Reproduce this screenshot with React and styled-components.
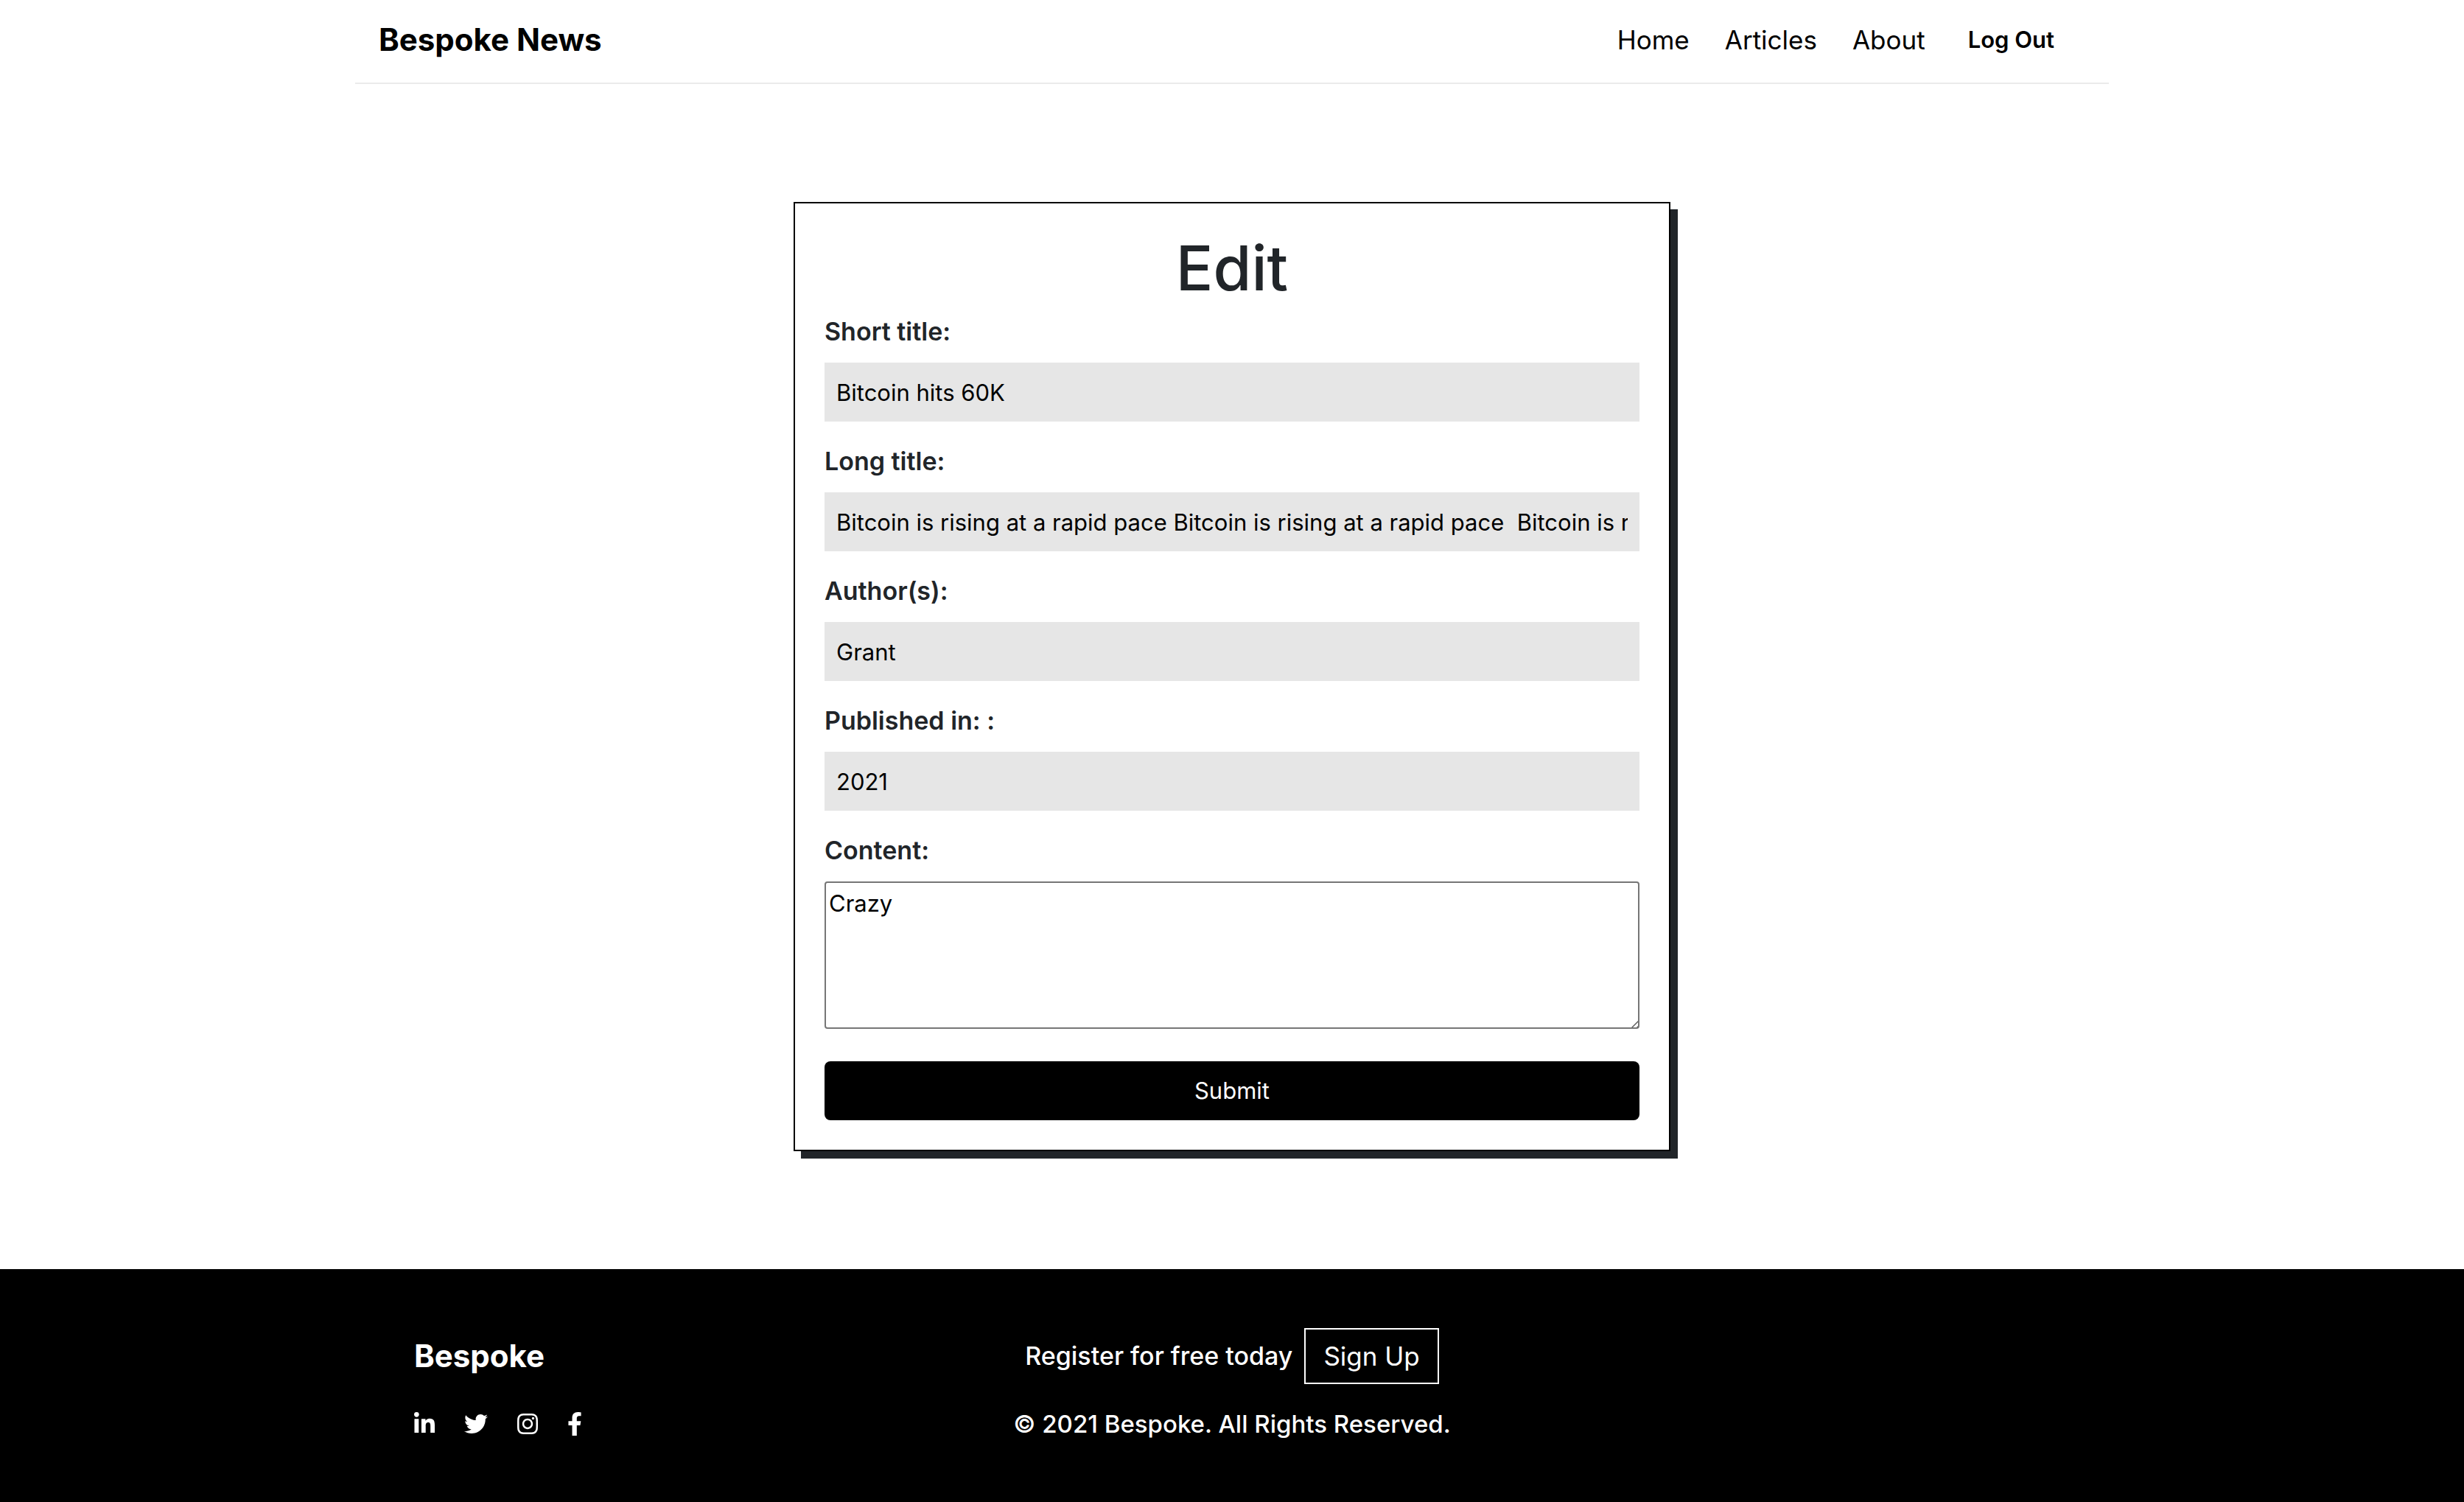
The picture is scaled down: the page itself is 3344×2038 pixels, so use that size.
import React, { useState } from 'react';
import styled, { createGlobalStyle } from 'styled-components';
import { FaLinkedinIn, FaTwitter, FaInstagram, FaFacebookF } from 'react-icons/fa';

const GlobalStyle = createGlobalStyle`
  *, *::before, *::after { box-sizing: border-box; }
  html { background: #000; }
  body {
    margin: 0;
    background: #fff;
    color: #212529;
    font-family: Inter, "Liberation Sans", sans-serif;
    font-size: 34px;
    line-height: 48px;
  }
  a { color: inherit; text-decoration: none; }
`;

const Page = styled.div`
  display: flex;
  flex-direction: column;
  min-height: 100vh;
`;

const Container = styled.div`
  width: 100%;
  max-width: 2380px;
  margin: 0 auto;
`;

const Header = styled(Container).attrs({ as: 'header' })`
  display: flex;
  align-items: center;
  justify-content: space-between;
  padding: 22px 74px 26px 32px;
  border-bottom: 2px solid #ebebeb;
  color: #000;
`;

const Brand = styled.a`
  font-size: 42px;
  font-weight: 700;
  line-height: 64px;
`;

const Nav = styled.nav`
  display: flex;
  align-items: center;
  gap: 48px;
`;

const NavLink = styled.a`
  font-size: 35px;
`;

const LogOut = styled.button`
  padding: 0 0 0 10px;
  border: 0;
  background: none;
  color: #000;
  font: inherit;
  font-size: 31px;
  font-weight: 600;
  cursor: pointer;
`;

const Main = styled(Container).attrs({ as: 'main' })`
  flex: 1;
  padding: 160px 0;
`;

const Card = styled.form`
  display: flex;
  flex-direction: column;
  width: 50%;
  margin: 0 auto;
  padding: 40px;
  border: 2px solid #000;
  background: #fff;
  box-shadow: 10px 10px 0 #212529;
`;

const Title = styled.h1`
  margin: 0 0 16px;
  font-size: 84px;
  font-weight: 500;
  line-height: 96px;
  text-align: center;
`;

const Field = styled.div`
  display: flex;
  flex-direction: column;
  gap: 20px;
  margin-bottom: 32px;
`;

const Label = styled.label`
  font-weight: 600;
  line-height: 44px;
`;

const TextInput = styled.input`
  width: 100%;
  height: 80px;
  padding: 0 16px;
  border: 0;
  background: #e6e6e6;
  color: #000;
  font: inherit;
  font-size: 31px;
`;

const TextArea = styled.textarea`
  display: block;
  width: 100%;
  height: 200px;
  margin-bottom: 12px;
  padding: 4px;
  border: 2px solid #767676;
  border-radius: 4px;
  color: #000;
  font: inherit;
  font-size: 31px;

  &::-webkit-scrollbar { width: 20px; height: 20px; }
  &::-webkit-resizer {
    background: url("data:image/svg+xml,%3Csvg xmlns='http://www.w3.org/2000/svg' width='20' height='20' fill='none' stroke='%23555' stroke-width='1.4'%3E%3Cpath d='M4 18L18 4M11 18L18 11'/%3E%3C/svg%3E") no-repeat;
  }
`;

const Submit = styled.button`
  height: 80px;
  border: 0;
  border-radius: 8px;
  background: #000;
  color: #fff;
  font: inherit;
  font-size: 31px;
  cursor: pointer;
`;

const FooterBar = styled.footer`
  background: #000;
  color: #fff;
`;

const FooterGrid = styled(Container)`
  display: grid;
  grid-template-columns: repeat(3, 1fr);
  padding: 80px 80px 82px;
`;

const FooterColumn = styled.div`
  display: flex;
  flex-direction: column;
  align-items: ${({ $align }) => $align};
  gap: 30px;
`;

const FooterBrand = styled(Brand)`
  line-height: 76px;
`;

const Socials = styled.div`
  display: flex;
  align-items: center;
  gap: 40px;
  height: 48px;
`;

const SocialLink = styled.a`
  display: flex;

  svg {
    width: ${({ $width }) => $width}px;
    height: 32px;
  }
`;

const Register = styled.div`
  display: flex;
  align-items: center;
  gap: 16px;
  font-weight: 500;
`;

const SignUp = styled.button`
  height: 76px;
  padding: 0 24px;
  border: 2px solid #fff;
  background: none;
  color: #fff;
  font: inherit;
  font-size: 35px;
  font-weight: 400;
  cursor: pointer;
`;

const Copyright = styled.p`
  margin: 0;
  font-size: 33px;
  font-weight: 500;
`;

const links = ['Home', 'Articles', 'About'];

const fields = [
  { id: 'shortTitle', label: 'Short title:' },
  { id: 'longTitle', label: 'Long title:' },
  { id: 'authors', label: 'Author(s):' },
  { id: 'published', label: 'Published in: :' },
];

const socials = [
  { name: 'LinkedIn', Icon: FaLinkedinIn, width: 28 },
  { name: 'Twitter', Icon: FaTwitter, width: 32 },
  { name: 'Instagram', Icon: FaInstagram, width: 28 },
  { name: 'Facebook', Icon: FaFacebookF, width: 20 },
];

const article = {
  shortTitle: 'Bitcoin hits 60K',
  longTitle:
    'Bitcoin is rising at a rapid pace Bitcoin is rising at a rapid pace  Bitcoin is rising at a rapid pace',
  authors: 'Grant',
  published: '2021',
  content: 'Crazy',
};

export default function App() {
  const [values, setValues] = useState(article);
  const update = (event) =>
    setValues({ ...values, [event.target.id]: event.target.value });

  return (
    <Page>
      <GlobalStyle />
      <Header>
        <Brand href="#">Bespoke News</Brand>
        <Nav>
          {links.map((link) => (
            <NavLink key={link} href="#">{link}</NavLink>
          ))}
          <LogOut type="button">Log Out</LogOut>
        </Nav>
      </Header>
      <Main>
        <Card onSubmit={(event) => event.preventDefault()}>
          <Title>Edit</Title>
          {fields.map(({ id, label }) => (
            <Field key={id}>
              <Label htmlFor={id}>{label}</Label>
              <TextInput id={id} type="text" value={values[id]} onChange={update} />
            </Field>
          ))}
          <Field>
            <Label htmlFor="content">Content:</Label>
            <TextArea id="content" value={values.content} onChange={update} />
          </Field>
          <Submit type="submit">Submit</Submit>
        </Card>
      </Main>
      <FooterBar>
        <FooterGrid>
          <FooterColumn $align="flex-start">
            <FooterBrand href="#">Bespoke</FooterBrand>
            <Socials>
              {socials.map(({ name, Icon, width }) => (
                <SocialLink key={name} href="#" aria-label={name} $width={width}>
                  <Icon />
                </SocialLink>
              ))}
            </Socials>
          </FooterColumn>
          <FooterColumn $align="center">
            <Register>
              Register for free today
              <SignUp type="button">Sign Up</SignUp>
            </Register>
            <Copyright>© 2021 Bespoke. All Rights Reserved.</Copyright>
          </FooterColumn>
        </FooterGrid>
      </FooterBar>
    </Page>
  );
}
